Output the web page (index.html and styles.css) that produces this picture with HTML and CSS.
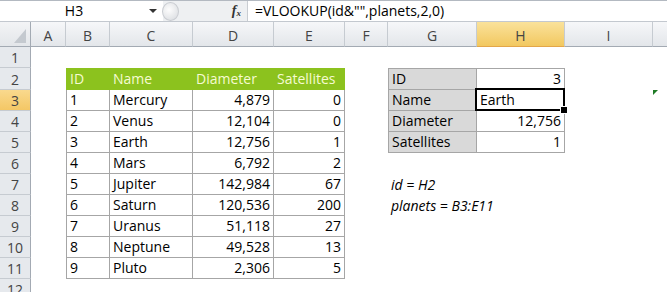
FILE: index.html
```html
<!DOCTYPE html>
<html>
  <head>
    <meta charset="utf-8">
    <link rel="stylesheet" href="styles.css">
  </head>
  <body>
    <div class="excel">
      <div class="fbar">
        <div class="namebox"><span class="ref">H3</span><i class="drop"></i></div>
        <div class="grip"><span class="knob"></span><span class="fx">f<sub>x</sub></span></div>
        <div class="formula">=VLOOKUP(id&amp;"",planets,2,0)</div>
      </div>
      <table class="sheet">
        <colgroup>
          <col class="w-hd"><col class="w-a"><col class="w-b"><col class="w-c"><col class="w-d"><col class="w-e">
          <col class="w-f"><col class="w-g"><col class="w-h"><col class="w-i"><col class="w-j">
        </colgroup>
        <thead>
          <tr>
            <th class="corner"><i></i></th>
            <th class="col">A</th><th class="col">B</th><th class="col">C</th><th class="col">D</th><th class="col">E</th>
            <th class="col">F</th><th class="col">G</th><th class="col on">H</th><th class="col">I</th><th class="col"></th>
          </tr>
        </thead>
        <tbody>
          <tr>
            <th class="row">1</th><td></td><td></td><td></td><td></td><td></td><td></td><td></td><td></td><td></td><td></td>
          </tr>
          <tr>
            <th class="row">2</th><td></td>
            <td class="t l top green">ID</td><td class="t top green">Name</td><td class="t top green">Diameter</td><td class="t top green">Satellites</td>
            <td></td>
            <td class="t l top lbl">ID</td><td class="t top num">3</td>
            <td></td><td></td>
          </tr>
          <tr>
            <th class="row on">3</th><td></td>
            <td class="t l">1</td><td class="t">Mercury</td><td class="t num">4,879</td><td class="t num">0</td>
            <td></td>
            <td class="t l lbl">Name</td><td class="t sel">Earth</td>
            <td></td><td class="err"></td>
          </tr>
          <tr>
            <th class="row">4</th><td></td>
            <td class="t l">2</td><td class="t">Venus</td><td class="t num">12,104</td><td class="t num">0</td>
            <td></td>
            <td class="t l lbl">Diameter</td><td class="t num">12,756</td>
            <td></td><td></td>
          </tr>
          <tr>
            <th class="row">5</th><td></td>
            <td class="t l">3</td><td class="t">Earth</td><td class="t num">12,756</td><td class="t num">1</td>
            <td></td>
            <td class="t l lbl">Satellites</td><td class="t num">1</td>
            <td></td><td></td>
          </tr>
          <tr>
            <th class="row">6</th><td></td>
            <td class="t l">4</td><td class="t">Mars</td><td class="t num">6,792</td><td class="t num">2</td>
            <td></td><td></td><td></td><td></td><td></td>
          </tr>
          <tr>
            <th class="row">7</th><td></td>
            <td class="t l">5</td><td class="t">Jupiter</td><td class="t num">142,984</td><td class="t num">67</td>
            <td></td><td class="note">id = H2</td><td></td><td></td><td></td>
          </tr>
          <tr>
            <th class="row">8</th><td></td>
            <td class="t l">6</td><td class="t">Saturn</td><td class="t num">120,536</td><td class="t num">200</td>
            <td></td><td class="note">planets = B3:E11</td><td></td><td></td><td></td>
          </tr>
          <tr>
            <th class="row">9</th><td></td>
            <td class="t l">7</td><td class="t">Uranus</td><td class="t num">51,118</td><td class="t num">27</td>
            <td></td><td></td><td></td><td></td><td></td>
          </tr>
          <tr>
            <th class="row">10</th><td></td>
            <td class="t l">8</td><td class="t">Neptune</td><td class="t num">49,528</td><td class="t num">13</td>
            <td></td><td></td><td></td><td></td><td></td>
          </tr>
          <tr>
            <th class="row">11</th><td></td>
            <td class="t l">9</td><td class="t">Pluto</td><td class="t num">2,306</td><td class="t num">5</td>
            <td></td><td></td><td></td><td></td><td></td>
          </tr>
          <tr>
            <th class="row">12</th><td></td><td></td><td></td><td></td><td></td><td></td><td></td><td></td><td></td><td></td>
          </tr>
        </tbody>
      </table>
    </div>
  </body>
</html>
```

FILE: styles.css
```css
* { margin: 0; padding: 0; box-sizing: border-box; }

body { background: #fff; font-family: "Open Sans", "Liberation Sans", sans-serif; color: #000; }

.excel { width: 667px; height: 292px; overflow: hidden; }

/* formula bar */
.fbar {
  display: flex;
  height: 22px;
  border-top: 1px solid #b3b9c1;
  border-bottom: 1px solid #c3c8cf;
  font-size: 14px;
}
.namebox { width: 163px; display: flex; align-items: center; }
.namebox .ref { width: 148px; text-align: center; line-height: 20px; }
.drop {
  width: 0; height: 0;
  border-left: 4px solid transparent;
  border-right: 4px solid transparent;
  border-top: 4px solid #333;
  margin-left: 1px;
}
.grip {
  width: 85px;
  display: flex;
  align-items: center;
  justify-content: space-between;
  background: #eef0f2;
  border-right: 1px solid #c9cdd2;
  padding: 0 6px 0 0;
}
.knob {
  width: 17px; height: 19px;
  border-radius: 50%;
  background: radial-gradient(circle at 40% 40%, #fdfdfd, #e2e4e7 70%);
  border: 1px solid #c9ccd1;
  margin-left: -1px;
}
.fx { font-family: "Liberation Serif", serif; font-style: italic; font-weight: bold; font-size: 14px; color: #333; }
.fx sub { font-size: 9px; vertical-align: -1px; }
.formula { flex: 1; padding-left: 7px; line-height: 20px; white-space: nowrap; }

/* sheet grid */
.sheet {
  table-layout: fixed;
  border-collapse: separate;
  border-spacing: 0;
  width: 753px;
  font-size: 14px;
}
.w-hd { width: 31px; }
.w-a { width: 35px; }
.w-b { width: 44px; }
.w-c { width: 83px; }
.w-d { width: 81px; }
.w-e { width: 71px; }
.w-f { width: 43px; }
.w-g { width: 89px; }
.w-h { width: 88px; }
.w-i { width: 88px; }
.w-j { width: 100px; }

thead tr { height: 25px; }
tbody tr { height: 21px; }

th { font-weight: normal; color: #444; font-size: 14px; }
.col {
  background: linear-gradient(#f6f7f9, #e3e6ea);
  border-right: 1px solid #c6cbd1;
  border-bottom: 1px solid #a3aab3;
  padding-top: 2px;
}
.col.on { background: linear-gradient(#fae29b, #f2c860); border-bottom-color: #e3a64a; }
.corner {
  position: relative;
  background: linear-gradient(#f3f4f6, #e3e6ea);
  border-right: 1px solid #a3aab3;
  border-bottom: 1px solid #a3aab3;
}
.corner i {
  position: absolute; right: 4px; bottom: 3px;
  width: 0; height: 0;
  border-left: 12px solid transparent;
  border-bottom: 14px solid #c4c9cf;
}
.row {
  background: #e6e9ed;
  border-right: 1px solid #a3aab3;
  border-bottom: 1px solid #c6cbd1;
  padding-top: 1px;
}
.row.on { background: linear-gradient(#f9d98e, #f4c765); }

td {
  white-space: nowrap;
  padding: 0 3px 0 3px;
  vertical-align: bottom;
  line-height: 20px;
}

/* bordered tables */
.t { border-right: 1px solid #a6a6a6; border-bottom: 1px solid #a6a6a6; }
.t.l { border-left: 1px solid #a6a6a6; }
.t.top { border-top: 1px solid #a6a6a6; }
.green { background: #8cc21e; color: #f6fbd2; border-color: #8cc21e; }
.t.l.green, .t.top.green { border-color: #8cc21e; }
.lbl { background: #d9d9d9; }
.num { text-align: right; }

.note { font-style: italic; padding-left: 3px; }

/* active cell */
.sel { position: relative; }
.sel::after {
  content: '';
  position: absolute;
  left: -2px; top: -2px; right: -1px; bottom: -1px;
  border: 2px solid #000;
}
.sel::before {
  content: '';
  position: absolute;
  right: -4px; bottom: -4px;
  width: 6px; height: 6px;
  background: #000;
  border: 1px solid #fff;
  z-index: 1;
}

/* error indicator */
.err { position: relative; }
.err::before {
  content: '';
  position: absolute; left: 0; top: 0;
  border-top: 5px solid #1e7b25;
  border-right: 5px solid transparent;
}
```
